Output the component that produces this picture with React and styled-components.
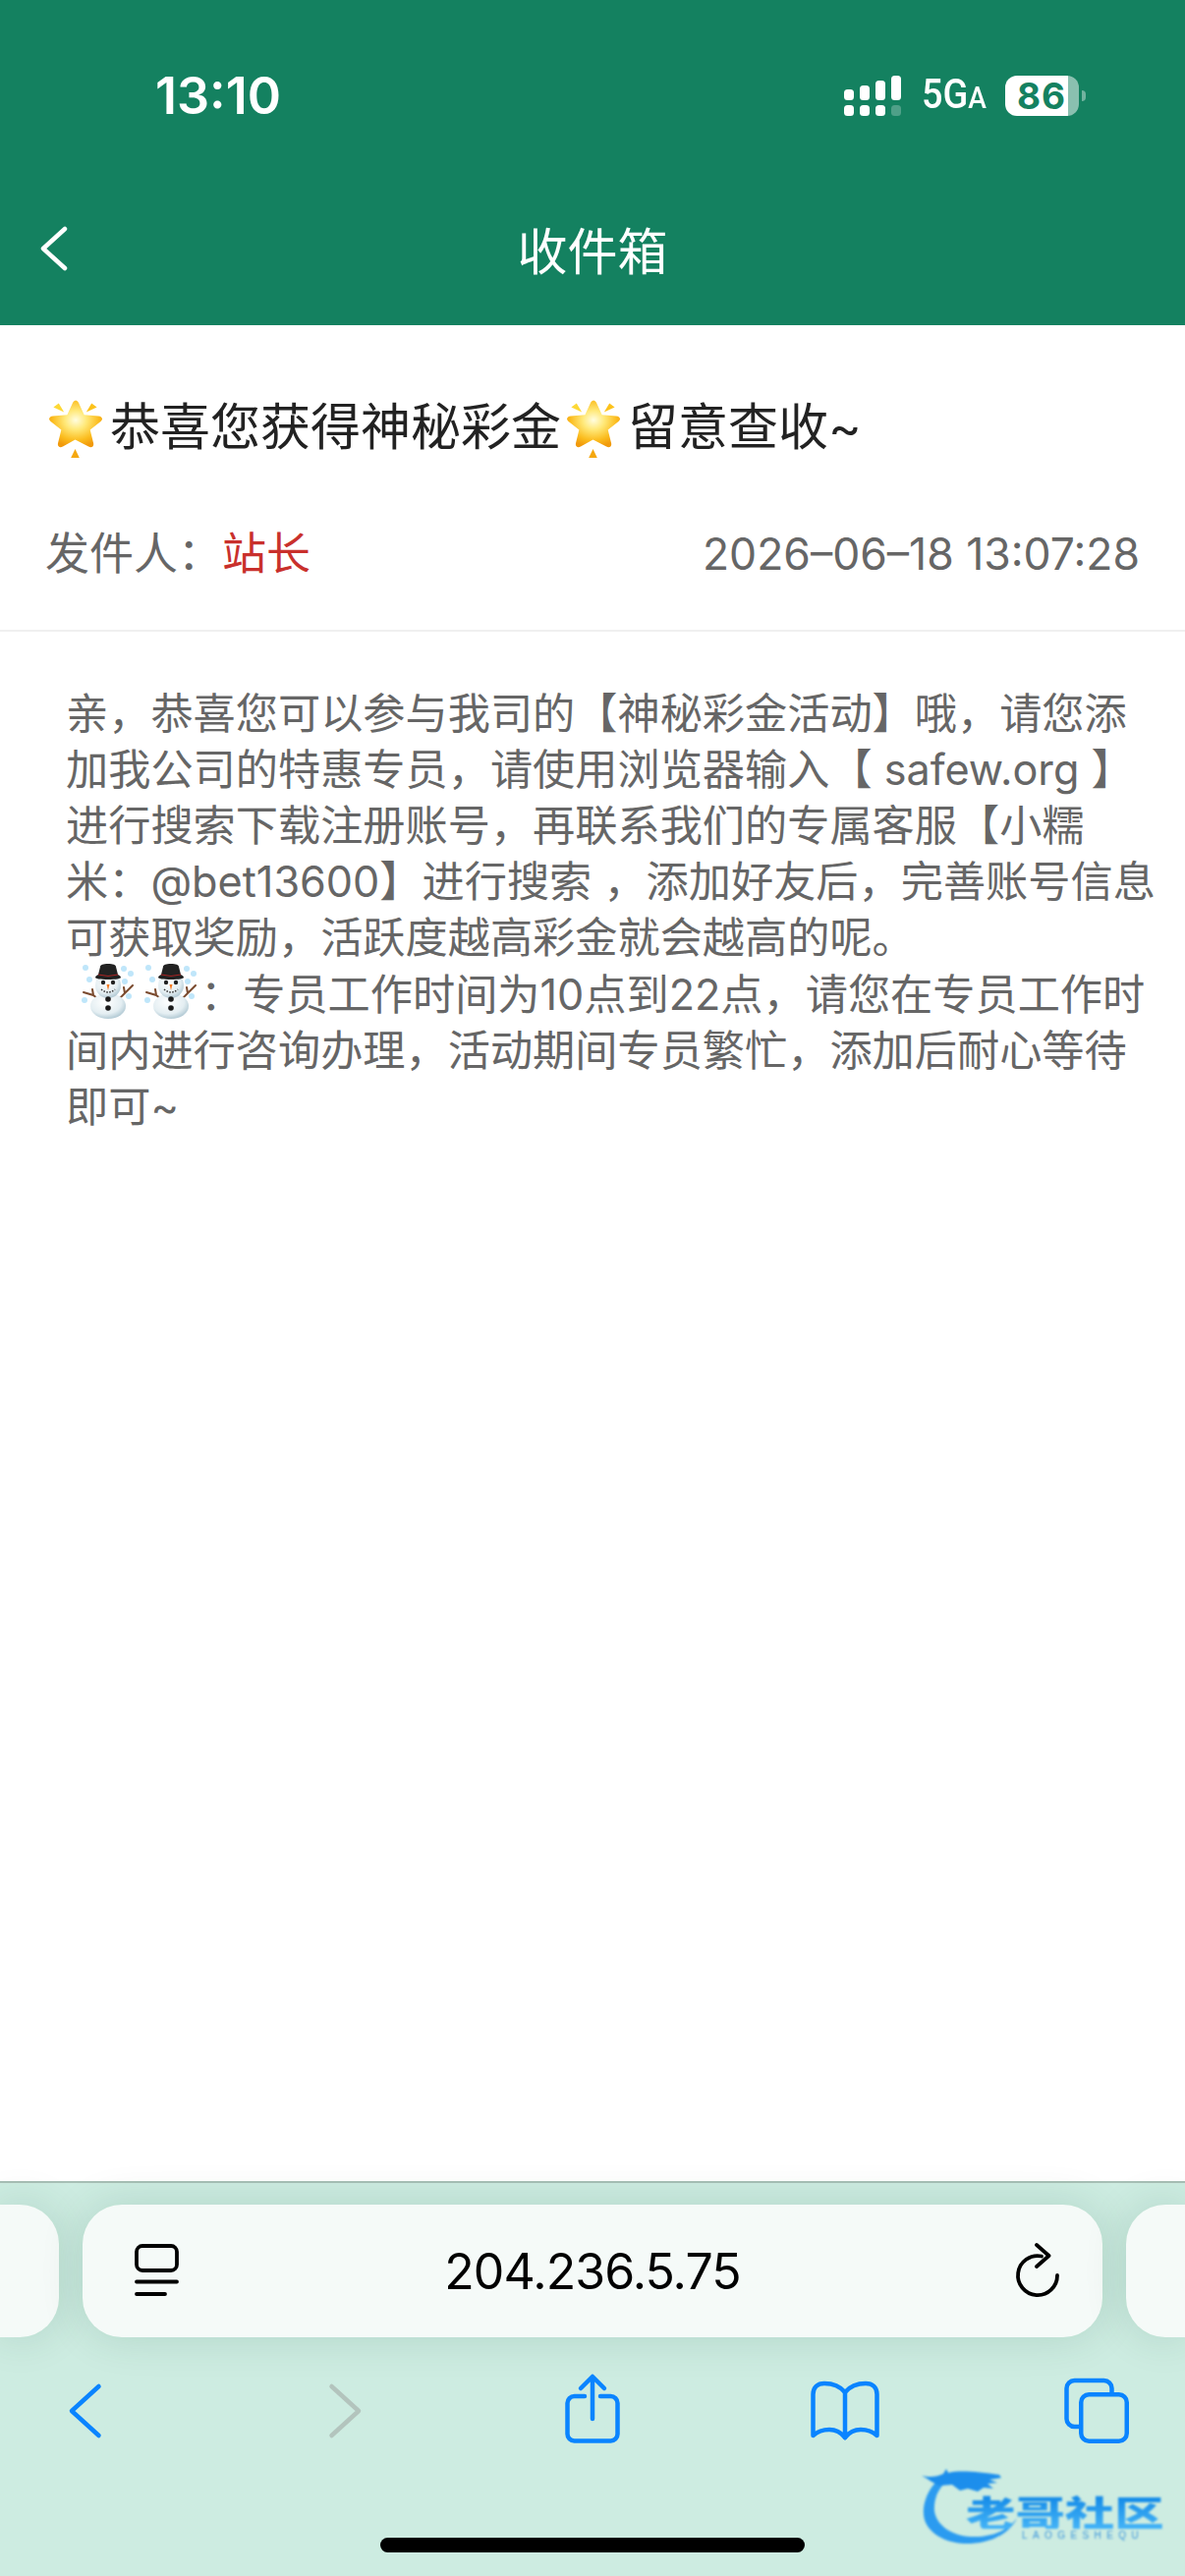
import styled, { createGlobalStyle } from 'styled-components';

const GREEN = '#148160';
const BLUE = '#0a84ff';
const TEXT_FONT = '"Inter", "Noto Sans CJK SC", sans-serif';

const bodyLines = [
  '亲，恭喜您可以参与我司的【神秘彩金活动】哦，请您添',
  '加我公司的特惠专员，请使用浏览器输入【 safew.org 】',
  '进行搜索下载注册账号，再联系我们的专属客服【小糯',
  '米：@bet13600】进行搜索 ，添加好友后，完善账号信息',
  '可获取奖励，活跃度越高彩金就会越高的呢。',
];
const bodyLinesAfter = [
  '间内进行咨询办理，活动期间专员繁忙，添加后耐心等待',
  '即可~',
];

const StarIcon = ({ id }) => (
  <StarSvg viewBox="2 0 51 62" preserveAspectRatio="none">
    <defs>
      <radialGradient id={id} cx="50%" cy="42%" r="58%">
        <stop offset="0%" stopColor="#fffde0" />
        <stop offset="35%" stopColor="#ffe97a" />
        <stop offset="75%" stopColor="#fbbc1e" />
        <stop offset="100%" stopColor="#f19a0c" />
      </radialGradient>
    </defs>
    <path
      d="M27.5 3.5c1.6 0 2.6 1 3.3 2.6l5.2 12.2 13.4 1.1c3.6.3 4.8 3.3 2.2 5.6l-10 8.6 3.1 13.5c.8 3.4-1.8 5.2-4.6 3.4L27.5 43.6l-11.6 6.9c-2.9 1.8-5.4 0-4.6-3.4l3.1-13.5-10-8.6c-2.6-2.3-1.4-5.3 2.2-5.6l13.4-1.1 5.2-12.2c.7-1.600 1.700-2.600 3.300-2.600z"
      fill={`url(#${id})`}
    />
    <path d="M7 10.500 12 6.500l5 9z" fill="#fdd835" />
    <path d="M48 10.500 43 6.500l-5 9z" fill="#fcc21b" />
    <path d="M27.500 53 31.500 62h-8z" fill="#f5a810" />
  </StarSvg>
);

const SnowmanIcon = ({ id }) => (
  <SnowSvg viewBox="0 0 54 56">
    <defs>
      <radialGradient id={id} cx="42%" cy="35%" r="70%">
        <stop offset="0%" stopColor="#ffffff" />
        <stop offset="65%" stopColor="#e4eef2" />
        <stop offset="100%" stopColor="#a9c3cf" />
      </radialGradient>
    </defs>
    {[[4, 4], [8, 16], [43, 5], [50, 10], [44, 18], [3, 37], [48, 33]].map(([cx, cy]) => (
      <circle key={`${cx}-${cy}`} cx={cx} cy={cy} r="3" fill="#bfe6fa" />
    ))}
    <path d="M2 29l10 3 5 4M12 32l-1-6M52 22l-11 11-4 3M44 30l-1-6" fill="none" stroke="#7a4a2e" strokeWidth="2" strokeLinecap="round" />
    <ellipse cx="27" cy="43" rx="18" ry="13" fill={`url(#${id})`} />
    <circle cx="27" cy="22" r="13" fill={`url(#${id})`} />
    <circle cx="27" cy="36" r="2.800" fill="#1b1b1b" />
    <circle cx="27" cy="45" r="2.800" fill="#1b1b1b" />
    <circle cx="22" cy="19" r="2.200" fill="#222" />
    <circle cx="32" cy="19" r="2.200" fill="#222" />
    <path d="M25.500 21h3L27 27z" fill="#f47a20" />
    <path d="M20 26q7 6 14 0" fill="none" stroke="#333" strokeWidth="1.500" strokeDasharray="1.500 1.500" />
    <path d="M19 3c0-2 3-3 8-3s8 1 8 3l2 8c2 1 3 2 3 3 0 1-5 2-13 2S14 15 14 14c0-1 1-2 3-3z" fill="#222" />
    <path d="M17 11q10 3 20 0" fill="none" stroke="#a22" strokeWidth="1" />
  </SnowSvg>
);

const App = () => (
  <Page>
    <GlobalStyle />
    <Header>
      <StatusBar>
        <Time>13:10</Time>
        <StatusRight>
          <svg width="58" height="41" viewBox="0 0 58 41" fill="#fff">
            <rect x="0" y="14" width="10" height="11" rx="3.500" />
            <rect x="16" y="10" width="10" height="15" rx="3.500" />
            <rect x="32" y="5" width="10" height="20" rx="3.500" />
            <rect x="48" y="0" width="10" height="25" rx="3.500" />
            <rect x="0" y="30" width="10" height="11" rx="3.500" />
            <rect x="16" y="30" width="10" height="11" rx="3.500" />
            <rect x="32" y="30" width="10" height="11" rx="3.500" />
            <rect x="48" y="30" width="10" height="11" rx="3.500" opacity=".25" />
          </svg>
          <Network>
            5G<small>A</small>
          </Network>
          <Battery>86</Battery>
          <BatteryNub />
        </StatusRight>
      </StatusBar>
      <NavBar>
        <BackLink>
          <svg width="28" height="46" viewBox="0 0 28 46" fill="none" stroke="#fff" strokeWidth="4.500" strokeLinecap="round" strokeLinejoin="round">
            <path d="M25 3 3 23l22 20" />
          </svg>
        </BackLink>
        <NavTitle>收件箱</NavTitle>
      </NavBar>
    </Header>

    <Subject>
      <StarIcon id="star-a" />
      <SubjectText>恭喜您获得神秘彩金</SubjectText>
      <StarIcon id="star-b" />
      <SubjectText>留意查收~</SubjectText>
    </Subject>

    <Meta>
      <Sender>
        发件人：<SenderName>站长</SenderName>
      </Sender>
      <MetaDate>2026–06–18 13:07:28</MetaDate>
    </Meta>

    <Content>
      {bodyLines.map((line) => (
        <BodyLine key={line}>{line}</BodyLine>
      ))}
      <BodyLine>
        <SnowmanIcon id="snow-a" />
        <SnowmanIcon id="snow-b" />
        ：专员工作时间为10点到22点，请您在专员工作时
      </BodyLine>
      {bodyLinesAfter.map((line) => (
        <BodyLine key={line}>{line}</BodyLine>
      ))}
    </Content>

    <BrowserChrome>
      <TabRow>
        <TabPeek side="left" />
        <AddressBar>
          <PageMenuIcon viewBox="0 0 45 56">
            <rect x="2" y="2" width="41" height="25" rx="6" />
            <path d="M2 38.500h41M2 51h29" />
          </PageMenuIcon>
          <Url>204.236.5.75</Url>
          <ReloadSlot>
            <svg width="52" height="60" viewBox="0 0 52 60" fill="none" stroke="#000" strokeWidth="3.800" strokeLinecap="round" strokeLinejoin="round">
              <path d="M30 15.500A20 20 0 1 0 46 35" />
              <path d="M25 4l12.500 11L25 26" />
            </svg>
          </ReloadSlot>
        </AddressBar>
        <TabPeek side="right" />
      </TabRow>

      <Toolbar>
        <ToolIcon viewBox="0 0 80 74" stroke={BLUE}>
          <path d="M54.500 14 27 39l27.500 25" />
        </ToolIcon>
        <ToolIcon viewBox="0 0 80 74" stroke="#b3c4bd">
          <path d="M33.500 14 61 39 33.500 64" />
        </ToolIcon>
        <ToolIcon viewBox="0 0 80 74" stroke={BLUE}>
          <path d="M34 24H23.500a7 7 0 0 0-7 7v31.500a7 7 0 0 0 7 7h37a7 7 0 0 0 7-7V31a7 7 0 0 0-7-7H50" />
          <path d="M42 47V5M30 16 42 4l12 12" />
        </ToolIcon>
        <ToolIcon viewBox="0 0 80 74" stroke={BLUE}>
          <path d="M41 20C36 14 28 11 20 11 13 11 8.500 15 8.500 22V64C13 60 19 58 25 58 31 58 37 61 41 66" />
          <path d="M41 20C46 14 54 11 62 11 69 11 73.500 15 73.500 22V64C69 60 63 58 57 58 51 58 45 61 41 66V20" />
        </ToolIcon>
        <ToolIcon viewBox="0 0 80 74" stroke={BLUE}>
          <rect x="24.250" y="22.250" width="46.500" height="47.500" rx="8" />
          <path d="M55.500 21v-5a8 8 0 0 0-8-8H17.500a8 8 0 0 0-8 8v31a8 8 0 0 0 8 8H23" />
        </ToolIcon>
      </Toolbar>

      <HomeIndicator />

      <Watermark>
        <WatermarkDragon viewBox="0 0 100 82">
          <path d="M22 10C5 22-1 42 3 55c6 17 27 25 47 24 22-1 40-11 47-26-9 13-27 20-47 19-20-1-35-12-37-26-1-14 5-26 17-34z" fill="#2b9bf0" />
          <path d="M0 10c8 2 16 1 22-2l3-5 2 4c12-3 30-1 52 2l2 3-12 2 8 3-10 1 6 5-10-1-6 4-10-3-8 2-8-6-12 1C14 19 8 14 0 10z" fill="#1c8eec" />
        </WatermarkDragon>
        <WatermarkTitle>老哥社区</WatermarkTitle>
        <WatermarkSub>LAOGESHEQU</WatermarkSub>
      </Watermark>
    </BrowserChrome>
  </Page>
);

export default App;

const GlobalStyle = createGlobalStyle`
  html, body {
    margin: 0;
    padding: 0;
    background: #fff;
  }
  body {
    font-family: ${TEXT_FONT};
  }
`;

const Page = styled.div`
  width: 1206px;
  height: 2622px;
  display: flex;
  flex-direction: column;
  overflow: hidden;
  background: #fff;
`;

const Header = styled.header`
  background: ${GREEN};
  height: 331px;
  color: #fff;
`;

const StatusBar = styled.div`
  height: 183px;
  box-sizing: border-box;
  padding: 77px 101px 0 158px;
  display: flex;
  justify-content: space-between;
  align-items: flex-start;
`;

const Time = styled.div`
  font-size: 52px;
  line-height: 41px;
  font-weight: 600;
  letter-spacing: 0;
`;

const StatusRight = styled.div`
  display: flex;
  align-items: center;
  height: 41px;
`;

const Network = styled.div`
  font-family: "Roboto", sans-serif;
  font-size: 43px;
  line-height: 41px;
  font-weight: 500;
  width: 65px;
  margin: 0 20px 0 21px;
  white-space: nowrap;
  transform: scaleX(0.88);
  transform-origin: left center;
  small {
    font-size: 32px;
  }
`;

const Battery = styled.div`
  width: 75px;
  height: 41px;
  box-sizing: border-box;
  padding-left: 12px;
  border-radius: 12px;
  background: linear-gradient(to right, #fff 64px, rgba(255, 255, 255, 0.5) 64px);
  color: ${GREEN};
  font-size: 37px;
  line-height: 41px;
  font-weight: 700;
  letter-spacing: 1px;
`;

const BatteryNub = styled.div`
  width: 4px;
  height: 11px;
  margin-left: 3px;
  border-radius: 0 6px 6px 0;
  background: rgba(255, 255, 255, 0.4);
`;

const NavBar = styled.nav`
  height: 148px;
  display: grid;
  grid-template-columns: 1fr auto 1fr;
  align-items: center;
`;

const BackLink = styled.div`
  padding-left: 41px;
  display: flex;
  align-items: center;
  margin-top: -8px;
`;

const NavTitle = styled.h1`
  margin: 0;
  font-size: 51px;
  line-height: 60px;
  font-weight: 400;
  color: #fff;
`;

const Subject = styled.div`
  padding: 73px 0 0 49px;
  display: flex;
  align-items: center;
  height: 135px;
  box-sizing: border-box;
`;

const StarSvg = styled.svg`
  width: 55px;
  height: 62px;
  flex: none;
  margin-right: 8px;
  & + span + & {
    margin-left: 5px;
    margin-right: 8px;
  }
`;

const SubjectText = styled.span`
  font-size: 51px;
  line-height: 62px;
  color: #222;
  white-space: nowrap;
`;

const Meta = styled.div`
  height: 177px;
  box-sizing: border-box;
  padding: 68px 46px 48px 46px;
  display: flex;
  justify-content: space-between;
  align-items: center;
  border-bottom: 2px solid #f0f0f0;
`;

const Sender = styled.div`
  font-size: 45px;
  line-height: 60px;
  color: #666;
`;

const SenderName = styled.span`
  color: #c9302c;
`;

const MetaDate = styled.div`
  font-size: 44.5px;
  line-height: 60px;
  color: #666;
  white-space: nowrap;
`;

const Content = styled.main`
  flex: 1;
  padding: 51px 0 0 67px;
`;

const BodyLine = styled.div`
  display: flex;
  align-items: center;
  height: 57.2px;
  font-size: 43.2px;
  color: #666;
  white-space: pre;
`;

const SnowSvg = styled.svg`
  width: 54px;
  height: 56px;
  flex: none;
  margin-left: 16px;
  & + & {
    margin-left: 10px;
    margin-right: 3px;
  }
`;

const BrowserChrome = styled.div`
  position: relative;
  height: 402px;
  box-sizing: border-box;
  border-top: 2px solid #a7bfb5;
  background: #cdece1;
  padding-top: 22px;
  display: flex;
  flex-direction: column;
`;

const TabRow = styled.div`
  display: grid;
  grid-template-columns: 60px 1038px 60px;
  gap: 24px;
  height: 135px;
`;

const TabPeek = styled.div`
  background: #f5faf8;
  border-radius: ${({ side }) => (side === 'left' ? '0 40px 40px 0' : '40px 0 0 40px')};
  box-shadow: 0 0 44px rgba(0, 70, 50, 0.14);
`;

const AddressBar = styled.div`
  background: #f5faf8;
  border-radius: 40px;
  box-shadow: 0 0 44px rgba(0, 70, 50, 0.14);
  padding: 0 40px;
  display: grid;
  grid-template-columns: 1fr auto 1fr;
  align-items: center;
`;

const PageMenuIcon = styled.svg`
  width: 45px;
  height: 56px;
  margin-left: 13px;
  fill: none;
  stroke: #000;
  stroke-width: 3.8px;
  stroke-linecap: round;
`;

const Url = styled.div`
  font-size: 50px;
  line-height: 60px;
  letter-spacing: -0.9px;
  color: #000;
`;

const ReloadSlot = styled.div`
  justify-self: end;
  display: flex;
  margin-top: -2px;
`;

const Toolbar = styled.div`
  padding: 36px 50px 0 46px;
  display: flex;
  justify-content: space-between;
`;

const ToolIcon = styled.svg`
  width: 80px;
  height: 74px;
  fill: none;
  stroke-width: 4.5px;
  stroke-linecap: round;
  stroke-linejoin: round;
`;

const HomeIndicator = styled.div`
  width: 432px;
  height: 15px;
  margin: 94px 0 0 387px;
  border-radius: 8px;
  background: #000;
`;

const Watermark = styled.div`
  position: absolute;
  left: 938px;
  top: 288px;
  width: 250px;
  height: 82px;
  filter: blur(0.8px);
`;

const WatermarkDragon = styled.svg`
  position: absolute;
  left: 0;
  top: 0;
  width: 100px;
  height: 82px;
`;

const WatermarkTitle = styled.div`
  position: absolute;
  left: 45px;
  top: 28px;
  font-family: "Noto Sans CJK SC", sans-serif;
  font-size: 36px;
  line-height: 36px;
  font-weight: 900;
  white-space: nowrap;
  transform: scaleX(1.4);
  transform-origin: left center;
  background: linear-gradient(#0f86e6, #45b4f7);
  -webkit-background-clip: text;
  background-clip: text;
  color: transparent;
`;

const WatermarkSub = styled.div`
  position: absolute;
  left: 102px;
  top: 65px;
  font-family: "Liberation Sans", sans-serif;
  font-size: 10px;
  line-height: 11px;
  letter-spacing: 5.4px;
  color: #3d96dc;
  white-space: nowrap;
`;
